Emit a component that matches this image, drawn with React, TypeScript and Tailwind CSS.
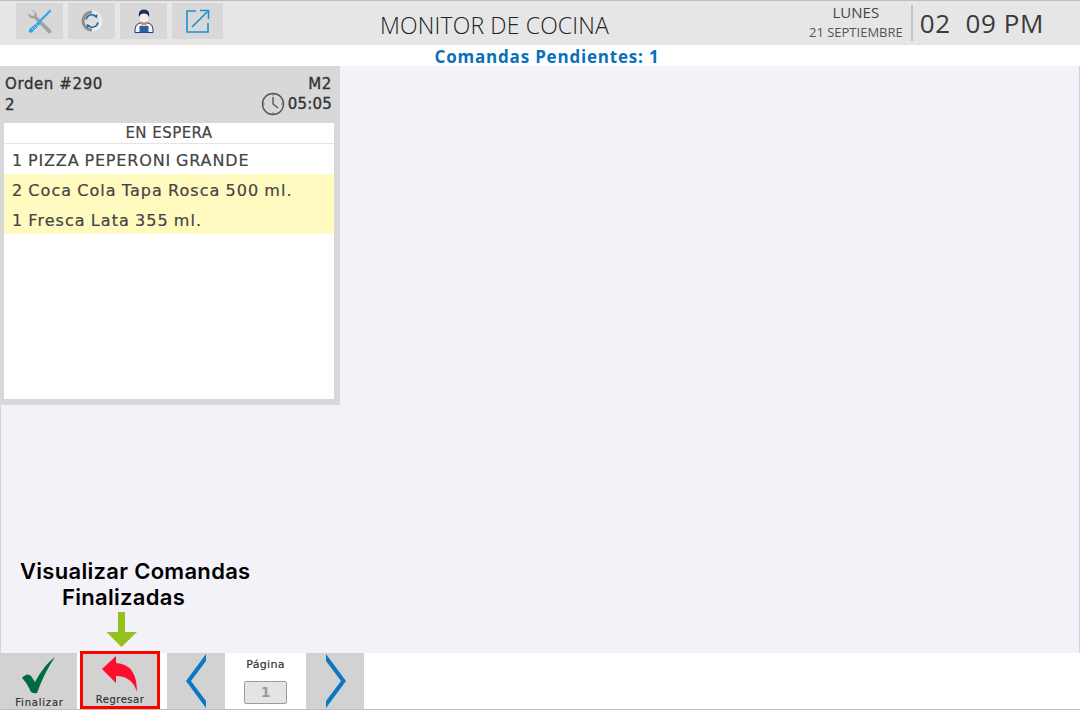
import type { ReactNode } from 'react';

const dejavu = "font-['DejaVu_Sans',sans-serif]";
const openSans = "font-['Open_Sans',sans-serif]";

function ToolsIcon() {
  return (
    <svg width="24" height="25" viewBox="0 0 24 25" fill="none">
      <path d="M3.5 1 L7 4 L6 7 L3 6.5 L0.5 3.8 Q0 8.5 4 9.5 L6 9.5 L20.5 24 Q22 25 23 23.5 Q24 22.5 23 21 L9 7.5 Q9 2 3.5 1 Z" fill="#a3a3a3" />
      <path d="M22 0.5 L23.5 2 L12 13.5 L10.5 12 Z" fill="#28a8ea" />
      <path d="M10.5 12.5 L12.5 14.5 L4.5 23 Q2 24.5 1 23 Q0 21.5 2 19.5 Z" fill="#28a8ea" />
      <path d="M3.5 18.5 L6 21 M5.5 16.5 L8 19 M7.5 14.5 L10 17" stroke="#d8d8d8" strokeWidth="0.7" />
    </svg>
  );
}

function RefreshIcon() {
  return (
    <svg width="22" height="22" viewBox="0 0 22 22" fill="none">
      <circle cx="11" cy="11" r="10.5" fill="#ececec" />
      <path d="M11 0.5 A10.5 10.5 0 0 0 11 21.5 Z" fill="#8e8e8e" />
      <circle cx="11" cy="11" r="7.5" fill="#dedede" />
      <path d="M5 9.5 A6 6 0 0 1 14.5 6" stroke="#2060b4" strokeWidth="1.5" />
      <path d="M17 12.5 A6 6 0 0 1 7.5 16" stroke="#2060b4" strokeWidth="1.5" />
      <path d="M16.5 4 L16 8 L12.8 6.6 Z" fill="#2060b4" />
      <path d="M5.5 18 L6 14 L9.2 15.4 Z" fill="#2060b4" />
    </svg>
  );
}

function WaiterIcon() {
  return (
    <svg width="20" height="24" viewBox="0 0 20 24" fill="none">
      <path d="M1 23.5 Q0.5 15 6 14 L14 14 Q19.5 15 19 23.5 Z" fill="#f4f4f4" stroke="#1d3f7a" strokeWidth="1" />
      <path d="M5.5 23.5 L5.5 17 L14.5 17 L14.5 23.5 Z" fill="#2b5ea8" />
      <path d="M7.5 13.5 L10 15.2 L12.5 13.5 L12.5 17 L10 15.8 L7.5 17 Z" fill="#e98a2a" />
      <ellipse cx="10" cy="8" rx="4.5" ry="5.5" fill="#f5f0ec" />
      <path d="M5 8.5 Q3.5 0.5 10 0.5 Q16.5 0.5 15 8.5 Q14 4.5 10 4.5 Q6 4.5 5 8.5 Z" fill="#1b2f63" />
    </svg>
  );
}

function ExportIcon() {
  return (
    <svg width="24" height="24" viewBox="0 0 24 24" fill="none" stroke="#1c8fd6">
      <path d="M10 2 L1 2 L1 23 L22 23 L22 14" strokeWidth="1.6" />
      <path d="M6 18 L21.5 2.5" strokeWidth="1.6" />
      <path d="M14 1.5 L22.5 1.5 L22.5 10" strokeWidth="1.6" />
    </svg>
  );
}

function ClockIcon() {
  return (
    <svg width="24" height="24" viewBox="0 0 24 24" fill="none" stroke="#555">
      <circle cx="12" cy="12" r="10.5" strokeWidth="1.4" />
      <path d="M12 5 L12 12 L17 16" strokeWidth="1.4" />
      <path d="M12 2 V3.5 M12 20.5 V22 M2 12 H3.5 M20.5 12 H22" strokeWidth="1" />
    </svg>
  );
}

function BackArrow() {
  return (
    <svg width="38" height="38" viewBox="0 0 38 38" className="mb-[1px]">
      <path d="M1 14 L15 1 L15 8 Q36 9 36 37 Q31 21 15 21 L15 28 Z" fill="#fb0f2d" />
    </svg>
  );
}

function Chevron({ flip }: { flip?: boolean }) {
  return (
    <svg width="22" height="56" viewBox="0 0 22 56" className={flip ? 'rotate-180' : ''}>
      <path d="M20 1 L20 8 L5 28 L20 48 L20 55 L0 28 Z" fill="#0a78c2" />
    </svg>
  );
}

function OrderRow({ children }: { children: ReactNode }) {
  return <div className="h-[30px] pl-2 leading-[34px] whitespace-nowrap tracking-[1.05px] [word-spacing:-1px]">{children}</div>;
}

export default function App() {
  const topButtons = [
    { w: 'w-[47px]', icon: <ToolsIcon /> },
    { w: 'w-[47px]', icon: <RefreshIcon /> },
    { w: 'w-[47px]', icon: <WaiterIcon /> },
    { w: 'w-[51px]', icon: <ExportIcon /> },
  ];

  return (
    <div className="w-[1080px] h-[710px] flex flex-col bg-[#f2f2f8] overflow-hidden relative">
      {/* top bar */}
      <div className="h-[45px] shrink-0 bg-[#e6e6e6] border-t border-[#bdbdbd] flex items-center pl-4 pr-9">
        <div className="flex gap-[5px] w-[340px] mb-1">
          {topButtons.map((b, i) => (
            <div key={i} className={`${b.w} h-9 bg-[#d8d8d8] flex items-center justify-center`}>
              {b.icon}
            </div>
          ))}
        </div>
        <div className={`w-[277px] text-center text-[23px] tracking-[0.15px] font-light leading-none text-[#222] mt-[4px] whitespace-nowrap ${openSans}`}>
          MONITOR DE COCINA
        </div>
        <div className={`ml-auto flex items-center ${openSans}`}>
          <div className="flex flex-col items-center text-[#444] mr-2 w-[94px] mb-[2px]">
            <span className="text-[15px] leading-[20px]">LUNES</span>
            <span className="text-[13px] leading-[20px] text-[#555] whitespace-nowrap">21 SEPTIEMBRE</span>
          </div>
          <div className="w-[2px] h-9 bg-[#c4c4c4] mr-[7px]" />
          <div className="text-[26px] leading-none text-[#3a3a3a] tracking-[0.6px] whitespace-pre">02  09 PM</div>
        </div>
      </div>

      {/* pending count */}
      <div className={`h-[21px] shrink-0 bg-white pl-[14px] text-center text-[17px] leading-[24px] tracking-[0.8px] font-bold text-[#0a70b8] ${openSans}`}>
        Comandas Pendientes: 1
      </div>

      {/* board */}
      <div className="flex-1 min-h-0 border-x border-[#d4d4d8]">
        <div className={`-ml-px w-[340px] h-[339px] bg-[#d8d8d8] flex flex-col text-[#333] ${dejavu}`}>
          <div className="h-[57px] shrink-0 px-[5px] pr-2 pt-[9px] text-[15px] tracking-[0.6px] [-webkit-text-stroke:0.35px_#333]">
            <div className="flex justify-between leading-[18px]">
              <span>Orden #290</span>
              <span>M2</span>
            </div>
            <div className="flex justify-between items-center leading-[18px] mt-[1px]">
              <span>2</span>
              <span className="flex items-center gap-[3px] tracking-[0.2px] -mt-[2px]">
                <ClockIcon />
                05:05
              </span>
            </div>
          </div>
          <div className="flex-1 ml-1 mr-[6px] mb-[6px] bg-white text-[16px] text-[#444] [-webkit-text-stroke:0.2px_#444]">
            <div className="h-[21px] border-b border-[#e4e4e4] text-center text-[15px] tracking-[0.45px] leading-[21px]">EN ESPERA</div>
            <div className="h-[30px] pl-2 leading-[33px] whitespace-nowrap tracking-[0.85px] [word-spacing:-1px]">1 PIZZA PEPERONI GRANDE</div>
            <div className="bg-[#fefac0]">
              <OrderRow>2 Coca Cola Tapa Rosca 500 ml.</OrderRow>
              <OrderRow>1 Fresca Lata 355 ml.</OrderRow>
            </div>
          </div>
        </div>
      </div>

      {/* annotation over the board */}
      <div className="absolute left-5 top-[558px] flex flex-col font-['Inter',sans-serif] text-[22px] leading-[26px] font-semibold tracking-[0.3px] text-black whitespace-nowrap">
        <span>Visualizar Comandas</span>
        <span className="ml-[42px]">Finalizadas</span>
        <svg width="32" height="36" viewBox="0 0 32 36" className="mt-[2px] ml-[86px]">
          <path d="M12 0 H19 V20 H31 L15.5 35 L0.5 20 H12 Z" fill="#95c11f" />
        </svg>
      </div>

      {/* footer */}
      <div className={`h-[57px] shrink-0 bg-white border-b border-[#bdbdbd] flex items-stretch ${dejavu}`}>
        <div className="w-[77px] bg-[#d2d2d2] flex flex-col items-center justify-end">
          <svg width="34" height="38" viewBox="0 0 34 38" className="mb-[3px]">
            <path d="M0 22 Q5 16 9 20 L13 26 Q22 9 33 1 Q22 17 15 37 Q12 38 9 36 Q5 27 0 22 Z" fill="#006a41" />
          </svg>
          <span className="text-[10px] leading-[12px] tracking-[0.8px] pl-[2px] text-[#333] [-webkit-text-stroke:0.2px_#333]">Finalizar</span>
        </div>
        <div className="ml-[3px] w-[80px] h-[58px] -mt-[2px] border-[3px] border-[#f00] bg-[#d2d2d2] flex flex-col items-center justify-end">
          <BackArrow />
          <span className="text-[10px] leading-[12px] tracking-[0.5px] text-[#333] [-webkit-text-stroke:0.2px_#333]">Regresar</span>
        </div>
        <div className="ml-[7px] w-[58px] bg-[#d2d2d2] flex items-center justify-center pl-[1px]">
          <Chevron />
        </div>
        <div className="w-[81px] flex flex-col items-center">
          <span className="text-[11px] leading-[14px] mt-[5px] text-[#333] tracking-[0.3px] [-webkit-text-stroke:0.2px_#333]">Página</span>
          <div className="mt-[9px] w-[43px] h-[23px] bg-[#e4e4e4] border border-[#9c9c9c] rounded-[2px] text-center text-[14px] leading-[21px] font-bold text-[#999]">
            1
          </div>
        </div>
        <div className="w-[58px] bg-[#d2d2d2] flex items-center justify-center pr-[1px]">
          <Chevron flip />
        </div>
      </div>
    </div>
  );
}
